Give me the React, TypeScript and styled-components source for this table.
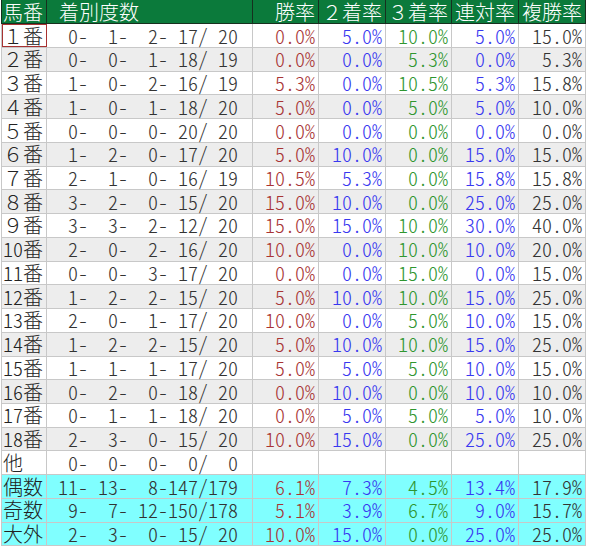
import React from "react";
import styled, { createGlobalStyle } from "styled-components";

const Global = createGlobalStyle`
  html, body { margin: 0; padding: 0; background: #ffffff; }
  body { font-family: "Noto Sans CJK JP", "Noto Sans", sans-serif; }
`;

const Table = styled.table`
  margin-left: 1px;
  border-collapse: collapse;
  table-layout: fixed;
  width: 584px;
  font-family: "Noto Sans CJK JP", sans-serif;
  font-size: 20px;
  font-weight: 300;
  line-height: 1;
`;

const Row = styled.tr<{ $bg: string }>`
  height: 23.74px;
  background: ${(p) => p.$bg};
`;

const HeadRow = styled.tr`
  height: 23.74px;
  background: #0b7a3b;
`;

const HeadCell = styled.th<{ $align: "left" | "right"; $pad: number }>`
  color: #ffffff;
  font-weight: 300;
  text-align: ${(p) => p.$align};
  padding: 0 ${(p) => (p.$align === "right" ? p.$pad : 0)}px 0 ${(p) => (p.$align === "left" ? p.$pad : 0)}px;
  border: 1px solid #17301f;
  border-top: none;
  white-space: pre;
  vertical-align: middle;
`;

const LabelCell = styled.td<{ $selected?: boolean }>`
  color: #222222;
  text-align: left;
  padding: 0 0 0 1px;
  border: 1px solid #c8c8c8;
  white-space: pre;
  outline: ${(p) => (p.$selected ? "1px solid #a83232" : "none")};
  outline-offset: -1px;
`;

const HalfNum = styled.span`
  font-feature-settings: "hwid" 1;
`;

const CountCell = styled.td`
  color: #333333;
  text-align: left;
  padding: 0 0 0 11px;
  border: 1px solid #c8c8c8;
  white-space: pre;
  font-feature-settings: "hwid" 1;
`;

const RateCell = styled.td<{ $color: string }>`
  color: ${(p) => p.$color};
  text-align: right;
  padding: 0 3px 0 0;
  border: 1px solid #c8c8c8;
  white-space: pre;
  font-feature-settings: "hwid" 1;
`;

const widths = [45, 206, 66, 67, 66, 67, 67];
const rateColors = ["#a83434", "#3838f0", "#2f962f", "#3838f0", "#333333"];

const headers: { t: string; a: "left" | "right"; p: number }[] = [
  { t: "馬番", a: "left", p: 1 },
  { t: "着別度数", a: "left", p: 12 },
  { t: "勝率", a: "right", p: 3 },
  { t: "２着率", a: "right", p: 3 },
  { t: "３着率", a: "right", p: 3 },
  { t: "連対率", a: "right", p: 3 },
  { t: "複勝率", a: "right", p: 3 },
];

const rows: string[][] = [
  ["１番", " 0-  1-  2- 17/ 20", "0.0%", "5.0%", "10.0%", "5.0%", "15.0%"],
  ["２番", " 0-  0-  1- 18/ 19", "0.0%", "0.0%", "5.3%", "0.0%", "5.3%"],
  ["３番", " 1-  0-  2- 16/ 19", "5.3%", "0.0%", "10.5%", "5.3%", "15.8%"],
  ["４番", " 1-  0-  1- 18/ 20", "5.0%", "0.0%", "5.0%", "5.0%", "10.0%"],
  ["５番", " 0-  0-  0- 20/ 20", "0.0%", "0.0%", "0.0%", "0.0%", "0.0%"],
  ["６番", " 1-  2-  0- 17/ 20", "5.0%", "10.0%", "0.0%", "15.0%", "15.0%"],
  ["７番", " 2-  1-  0- 16/ 19", "10.5%", "5.3%", "0.0%", "15.8%", "15.8%"],
  ["８番", " 3-  2-  0- 15/ 20", "15.0%", "10.0%", "0.0%", "25.0%", "25.0%"],
  ["９番", " 3-  3-  2- 12/ 20", "15.0%", "15.0%", "10.0%", "30.0%", "40.0%"],
  ["10番", " 2-  0-  2- 16/ 20", "10.0%", "0.0%", "10.0%", "10.0%", "20.0%"],
  ["11番", " 0-  0-  3- 17/ 20", "0.0%", "0.0%", "15.0%", "0.0%", "15.0%"],
  ["12番", " 1-  2-  2- 15/ 20", "5.0%", "10.0%", "10.0%", "15.0%", "25.0%"],
  ["13番", " 2-  0-  1- 17/ 20", "10.0%", "0.0%", "5.0%", "10.0%", "15.0%"],
  ["14番", " 1-  2-  2- 15/ 20", "5.0%", "10.0%", "10.0%", "15.0%", "25.0%"],
  ["15番", " 1-  1-  1- 17/ 20", "5.0%", "5.0%", "5.0%", "10.0%", "15.0%"],
  ["16番", " 0-  2-  0- 18/ 20", "0.0%", "10.0%", "0.0%", "10.0%", "10.0%"],
  ["17番", " 0-  1-  1- 18/ 20", "0.0%", "5.0%", "5.0%", "5.0%", "10.0%"],
  ["18番", " 2-  3-  0- 15/ 20", "10.0%", "15.0%", "0.0%", "25.0%", "25.0%"],
  ["他", " 0-  0-  0-  0/  0", "", "", "", "", ""],
  ["偶数", "11- 13-  8-147/179", "6.1%", "7.3%", "4.5%", "13.4%", "17.9%"],
  ["奇数", " 9-  7- 12-150/178", "5.1%", "3.9%", "6.7%", "9.0%", "15.7%"],
  ["大外", " 2-  3-  0- 15/ 20", "10.0%", "15.0%", "0.0%", "25.0%", "25.0%"],
];

function rowBg(i: number): string {
  if (i >= 19) return "#80ffff";
  if (i === 18) return "#ffffff";
  return i % 2 === 0 ? "#ffffff" : "#ededed";
}

function Label({ text }: { text: string }) {
  const m = text.match(/^([0-9]+)(.*)$/);
  if (!m) return <>{text}</>;
  return (
    <>
      <HalfNum>{m[1]}</HalfNum>
      {m[2]}
    </>
  );
}

export default function App() {
  return (
    <>
      <Global />
      <Table>
        <colgroup>
          {widths.map((w, i) => (
            <col key={i} style={{ width: w }} />
          ))}
        </colgroup>
        <thead>
          <HeadRow>
            {headers.map((h) => (
              <HeadCell key={h.t} $align={h.a} $pad={h.p}>
                {h.t}
              </HeadCell>
            ))}
          </HeadRow>
        </thead>
        <tbody>
          {rows.map((r, i) => (
            <Row key={r[0]} $bg={rowBg(i)}>
              <LabelCell $selected={i === 0}>
                <Label text={r[0]} />
              </LabelCell>
              <CountCell>{r[1]}</CountCell>
              {r.slice(2).map((v, j) => (
                <RateCell key={j} $color={rateColors[j]}>
                  {v}
                </RateCell>
              ))}
            </Row>
          ))}
        </tbody>
      </Table>
    </>
  );
}
